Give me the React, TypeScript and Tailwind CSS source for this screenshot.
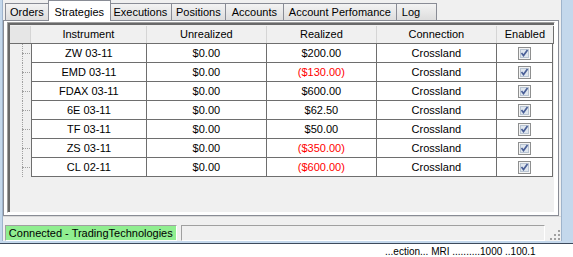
import React from "react"

const rows = [
  { inst: "ZW 03-11", unr: "$0.00", real: "$200.00", neg: false },
  { inst: "EMD 03-11", unr: "$0.00", real: "($130.00)", neg: true },
  { inst: "FDAX 03-11", unr: "$0.00", real: "$600.00", neg: false },
  { inst: "6E 03-11", unr: "$0.00", real: "$62.50", neg: false },
  { inst: "TF 03-11", unr: "$0.00", real: "$50.00", neg: false },
  { inst: "ZS 03-11", unr: "$0.00", real: "($350.00)", neg: true },
  { inst: "CL 02-11", unr: "$0.00", real: "($600.00)", neg: true },
]

// tab label + width in px
const tabs: [string, string][] = [
  ["Orders", "w-[44px]"],
  ["Strategies", "w-[63px]"],
  ["Executions", "w-[63px]"],
  ["Positions", "w-[55px]"],
  ["Accounts", "w-[59px]"],
  ["Account Perfomance", "w-[114px]"],
  ["Log", "w-[41px] justify-start pl-[5px]"],
]

function Check() {
  return (
    <svg width="13" height="13" viewBox="0 0 13 13">
      <rect x="0.5" y="0.5" width="12" height="12" fill="#f4f4f4" stroke="#8e8f8f" />
      <rect x="2.5" y="2.5" width="8" height="8" fill="#dfe6ee" stroke="#b8c4d2" />
      <path d="M3.5 6 L5.5 8.5 L9.5 3" fill="none" stroke="#4a5f97" strokeWidth="1.7" />
    </svg>
  )
}

export default function App() {
  const cell = "border-r border-b border-[#6e6e6e] flex items-center justify-center"
  const head = "border-r border-[#d5d5d5] flex items-center justify-center"

  return (
    <div className="w-[573px] h-[257px] overflow-hidden bg-white flex flex-col text-[11px] text-black [font-family:'Liberation_Sans',Arial,sans-serif]">
      <div className="flex h-[244px]">
        {/* left frame */}
        <div className="w-[3px] bg-[#c4d8ec] border-r border-[#9fb4cc]" />

        <div className="flex-1 flex flex-col bg-[#f0f0f0]">
          {/* tabs */}
          <div className="h-[20px] flex items-end pl-[2px]">
            {tabs.map(([t, w]) =>
              t === "Strategies" ? (
                <div
                  key={t}
                  className={`${w} h-[21px] -ml-[1px] -mr-[1px] -mb-[1px] bg-white border border-b-0 border-[#898c95] flex items-start justify-center pt-[3px] relative z-10`}
                >
                  {t}
                </div>
              ) : (
                <div
                  key={t}
                  className={`${w} h-[17px] border border-b-0 border-[#898c95] -ml-[1px] first:ml-0 bg-gradient-to-b from-[#f3f3f3] to-[#dddddd] flex items-center justify-center`}
                >
                  {t}
                </div>
              )
            )}
          </div>

          {/* tab panel */}
          <div className="h-[196px] mr-[2px] bg-white border border-[#898c95] pt-[1px] px-[3px] pb-[2px] flex">
            <div className="flex-1 border border-[#a0a0a0] border-r-white border-b-white flex bg-[#f0f0f0]">
              <div className="flex-1 border-l-2 border-t-2 border-[#696969] flex flex-col">
                <div className="flex flex-col w-[544px] pt-[1px]">
                  {/* header */}
                  <div className="flex h-[18px] border-b border-[#6e6e6e] bg-[#f0f0f0]">
                    <div className="w-[21px] bg-[#e6e6e6] border-r border-[#d5d5d5]" />
                    <div className={`${head} w-[116px]`}>Instrument</div>
                    <div className={`${head} w-[120px]`}>Unrealized</div>
                    <div className={`${head} w-[110px]`}>Realized</div>
                    <div className={`${head} w-[120px]`}>Connection</div>
                    <div className={`${head} w-[57px] border-r-[#6e6e6e]`}>Enabled</div>
                  </div>
                  {rows.map((r) => (
                    <div key={r.inst} className="flex h-[19px]">
                      <div className="w-[21px] relative">
                        <div className="absolute left-[12px] top-0 bottom-0 border-l border-dotted border-[#a0a0a0]" />
                        <div className="absolute left-[12px] right-[1px] top-[9px] border-t border-dotted border-[#a0a0a0]" />
                      </div>
                      <div className={`${cell} w-[116px] bg-white border-l`}>{r.inst}</div>
                      <div className={`${cell} w-[120px] bg-white`}>{r.unr}</div>
                      <div className={`${cell} w-[110px] bg-white ${r.neg ? "text-[#ff0000]" : ""}`}>{r.real}</div>
                      <div className={`${cell} w-[120px] bg-white`}>Crossland</div>
                      <div className={`${cell} w-[56px] bg-white`}>
                        <Check />
                      </div>
                    </div>
                  ))}
                </div>
              </div>
            </div>
          </div>

          {/* status bar */}
          <div className="flex-1 flex items-start gap-[4px] pl-[2px] border-t border-[#d9d9d9] pt-[8px]">
            <div className="h-[16px] px-[3px] bg-[#90ee90] border border-[#a0a0a0] border-r-white border-b-white flex items-center">
              Connected - TradingTechnologies
            </div>
            <div className="flex-1 h-[16px] border border-[#a0a0a0] border-r-white border-b-white" />
            <svg width="12" height="12" viewBox="0 0 12 12" className="mt-[4px]">
              {[
                [9, 1], [9, 5], [5, 5], [9, 9], [5, 9], [1, 9],
              ].map(([x, y], i) => (
                <rect key={i} x={x} y={y} width="2" height="2" fill="#a0a0a0" />
              ))}
            </svg>
          </div>
        </div>

        {/* right frame */}
        <div className="w-[13px] bg-[#c4d8ec] border-l border-[#9fb4cc]" />
      </div>
      <div className="h-[6px] bg-[#c4d8ec] border-b border-[#3c4a5c]" />
      <div className="flex-1 bg-white pl-[385px] pt-[3px] text-[10px] leading-none">
        ...ection... MRI ..........1000 ..100.1
      </div>
    </div>
  )
}
